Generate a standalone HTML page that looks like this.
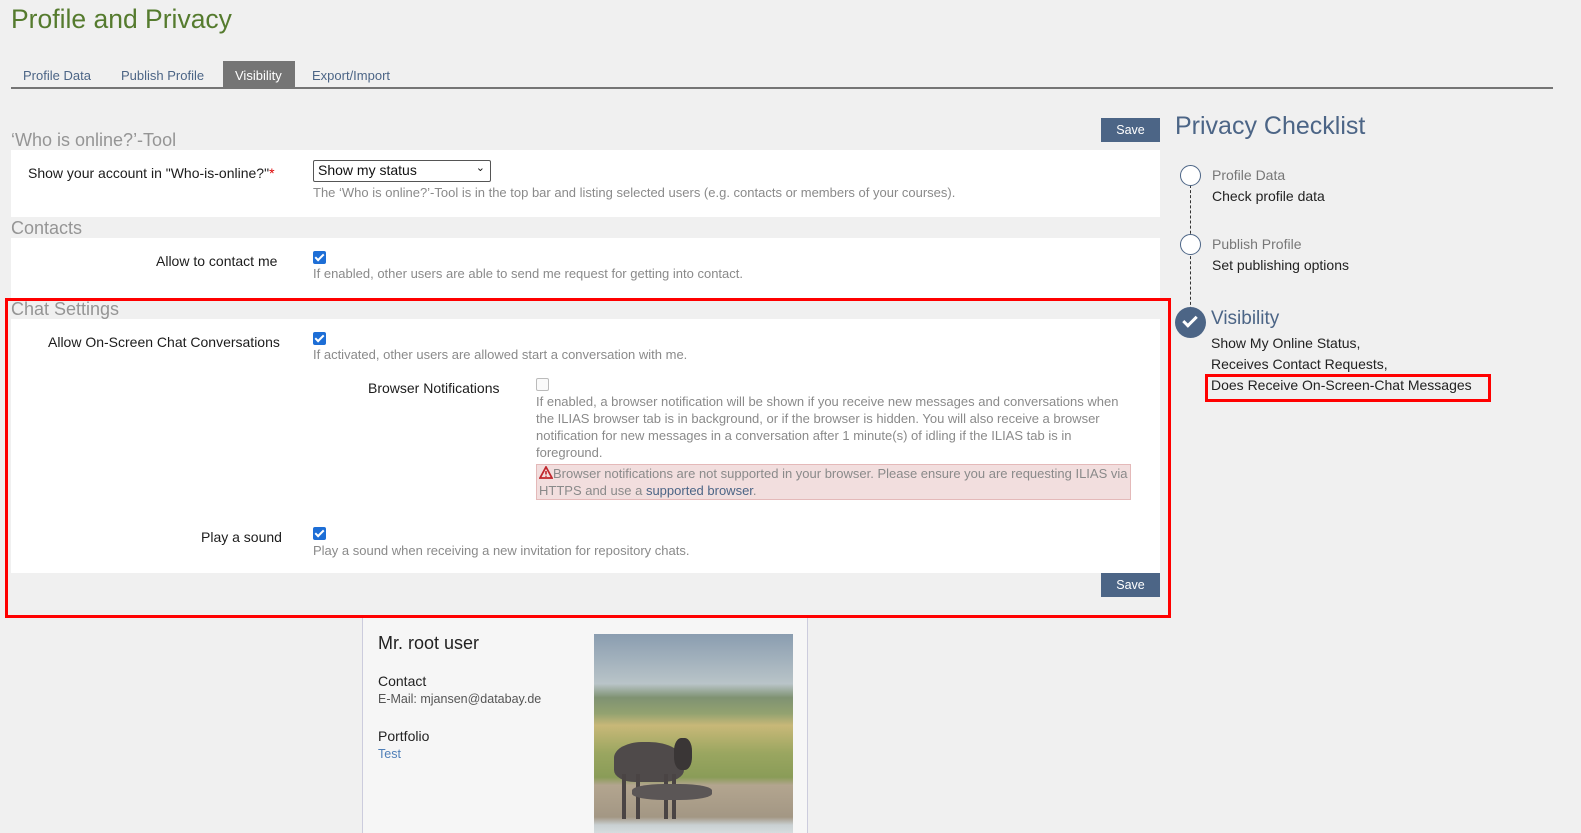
<!DOCTYPE html>
<html><head><meta charset="utf-8"><style>
*{box-sizing:border-box;margin:0;padding:0}
body{width:1581px;height:833px;overflow:hidden;background:#f0f0f0;font-family:"Liberation Sans",sans-serif;position:relative;color:#161616}
.a{position:absolute;white-space:nowrap}
.lbl{font-size:14px;color:#1c1c1c;text-align:right}
.desc{font-size:13px;color:#8a8a8a}
.h{font-size:18px;color:#959595}
.btn{position:absolute;background:#4c6586;color:#fff;font-size:12.5px;text-align:center;width:59px;height:24px;line-height:24px}
.cb{position:absolute;width:13px;height:13px;background:#1d6ed6;border-radius:2px}
.cb:after{content:"";position:absolute;left:4px;top:1px;width:3px;height:7px;border:solid #fff;border-width:0 2px 2px 0;transform:rotate(45deg)}
.panel{position:absolute;background:#fff;left:11px;width:1149px}
.circ{position:absolute;width:21px;height:21px;border:1.5px solid #4c6586;border-radius:50%;background:#fff}
</style></head><body>
<div class="a" style="left:11px;top:4px;font-size:26.5px;color:#557b2e">Profile and Privacy</div>
<div class="a" style="left:23px;top:68px;font-size:13px;color:#4c6586">Profile Data</div>
<div class="a" style="left:121px;top:68px;font-size:13px;color:#4c6586">Publish Profile</div>
<div class="a" style="left:223px;top:61px;width:72px;height:27px;background:#757575"></div>
<div class="a" style="left:235px;top:68px;font-size:13px;color:#fff">Visibility</div>
<div class="a" style="left:312px;top:68px;font-size:13px;color:#4c6586">Export/Import</div>
<div class="a" style="left:11px;top:87px;width:1542px;height:2px;background:#757575"></div>

<div class="a h" style="left:11px;top:130px">‘Who is online?’-Tool</div>
<div class="btn" style="left:1101px;top:118px">Save</div>
<div class="panel" style="top:150px;height:67px"></div>
<div class="a lbl" style="left:28px;top:165px">Show your account in "Who-is-online?"<span style="color:#d00">*</span></div>
<div class="a" style="left:313px;top:160px;width:178px;height:22px;border:1px solid #555;border-radius:2px;background:#fff;font-size:14px;padding:1px 4px;color:#111">Show my status<span style="position:absolute;right:5px;top:0px;font-size:11px">&#8964;</span></div>
<div class="a desc" style="left:313px;top:185px">The ‘Who is online?’-Tool is in the top bar and listing selected users (e.g. contacts or members of your courses).</div>

<div class="a h" style="left:11px;top:218px">Contacts</div>
<div class="panel" style="top:238px;height:60px"></div>
<div class="a lbl" style="left:156px;top:253px">Allow to contact me</div>
<div class="cb" style="left:313px;top:251px"></div>
<div class="a desc" style="left:313px;top:266px">If enabled, other users are able to send me request for getting into contact.</div>

<div class="a h" style="left:11px;top:299px">Chat Settings</div>
<div class="panel" style="top:319px;height:254px"></div>
<div class="a lbl" style="left:48px;top:334px">Allow On-Screen Chat Conversations</div>
<div class="cb" style="left:313px;top:332px"></div>
<div class="a desc" style="left:313px;top:347px">If activated, other users are allowed start a conversation with me.</div>
<div class="a lbl" style="left:368px;top:380px">Browser Notifications</div>
<div class="a" style="left:536px;top:378px;width:13px;height:13px;border:1px solid #bbb;border-radius:2px;background:#fafafa"></div>
<div class="a desc" style="left:536px;top:393px;white-space:normal;width:592px;line-height:17px">If enabled, a browser notification will be shown if you receive new messages and conversations when the ILIAS browser tab is in background, or if the browser is hidden. You will also receive a browser notification for new messages in a conversation after 1 minute(s) of idling if the ILIAS tab is in foreground.</div>
<div class="a desc" style="left:536px;top:464px;width:595px;height:36px;background:#f2dede;border:1px solid #e4b9b9;white-space:normal;line-height:17px;padding:0 2px"><svg width="14" height="13" viewBox="0 0 14 13" style="vertical-align:-1px"><path d="M7 1L13 12H1Z" fill="none" stroke="#c0272d" stroke-width="1.8"/><path d="M7 5v3.5M7 9.8v1" stroke="#c0272d" stroke-width="1.6"/></svg>Browser notifications are not supported in your browser. Please ensure you are requesting ILIAS via HTTPS and use a <span style="color:#4c6586">supported browser</span>.</div>
<div class="a lbl" style="left:201px;top:529px">Play a sound</div>
<div class="cb" style="left:313px;top:527px"></div>
<div class="a desc" style="left:313px;top:543px">Play a sound when receiving a new invitation for repository chats.</div>
<div class="btn" style="left:1101px;top:573px">Save</div>

<div class="a" style="left:5px;top:298px;width:1166px;height:320px;border:3px solid #f00"></div>

<div class="a" style="left:362px;top:618px;width:446px;height:215px;background:#f6f6f6;border-left:1px solid #ccd;border-right:1px solid #ccd"></div>
<div class="a" style="left:378px;top:633px;font-size:18px;color:#222">Mr. root user</div>
<div class="a" style="left:378px;top:673px;font-size:14px;color:#222">Contact</div>
<div class="a" style="left:378px;top:692px;font-size:12.5px;color:#555">E-Mail: mjansen@databay.de</div>
<div class="a" style="left:378px;top:728px;font-size:14px;color:#222">Portfolio</div>
<div class="a" style="left:378px;top:747px;font-size:12.5px;color:#4f7fb8">Test</div>
<div class="a" style="left:594px;top:634px;width:199px;height:199px;overflow:hidden;background:linear-gradient(#8a9db0 0%,#b9c4c8 25%,#7f9272 32%,#93a270 40%,#c8b878 46%,#9aa660 60%,#8a9c58 72%,#b3a58f 76%,#a39784 92%,#c9d0d2 96%,#d6dcde 100%)">
<div style="position:absolute;left:20px;top:108px;width:70px;height:40px;background:#4f4a4a;border-radius:40% 50% 30% 30%"></div>
<div style="position:absolute;left:80px;top:104px;width:18px;height:32px;background:#3a3636;border-radius:40%"></div>
<div style="position:absolute;left:28px;top:140px;width:4px;height:45px;background:#4a4444"></div>
<div style="position:absolute;left:42px;top:140px;width:4px;height:45px;background:#4a4444"></div>
<div style="position:absolute;left:70px;top:140px;width:4px;height:45px;background:#4a4444"></div>
<div style="position:absolute;left:78px;top:140px;width:4px;height:45px;background:#4a4444"></div>
<div style="position:absolute;left:38px;top:150px;width:80px;height:16px;background:#5b5656;border-radius:40%"></div>
</div>

<div class="a" style="left:1175px;top:112px;font-size:25px;color:#4c6586">Privacy Checklist</div>
<div class="a" style="left:1190px;top:185px;height:130px;border-left:1px dashed #333"></div>
<div class="circ" style="left:1180px;top:165px"></div>
<div class="circ" style="left:1180px;top:234px"></div>
<div class="a" style="left:1175px;top:307px;width:31px;height:31px;border-radius:50%;background:#4c6586"></div>
<div class="a" style="left:1186px;top:313px;width:8px;height:14px;border:solid #fff;border-width:0 3px 3px 0;transform:rotate(45deg)"></div>
<div class="a" style="left:1212px;top:167px;font-size:14px;color:#777">Profile Data</div>
<div class="a" style="left:1212px;top:188px;font-size:14px;color:#222">Check profile data</div>
<div class="a" style="left:1212px;top:236px;font-size:14px;color:#777">Publish Profile</div>
<div class="a" style="left:1212px;top:257px;font-size:14px;color:#222">Set publishing options</div>
<div class="a" style="left:1211px;top:308px;font-size:19px;color:#4c6586">Visibility</div>
<div class="a" style="left:1211px;top:335px;font-size:14px;color:#222">Show My Online Status,</div>
<div class="a" style="left:1211px;top:356px;font-size:14px;color:#222">Receives Contact Requests,</div>
<div class="a" style="left:1211px;top:377px;font-size:14px;color:#222">Does Receive On-Screen-Chat Messages</div>
<div class="a" style="left:1205px;top:374px;width:286px;height:28px;border:3px solid #f00"></div>
</body></html>
